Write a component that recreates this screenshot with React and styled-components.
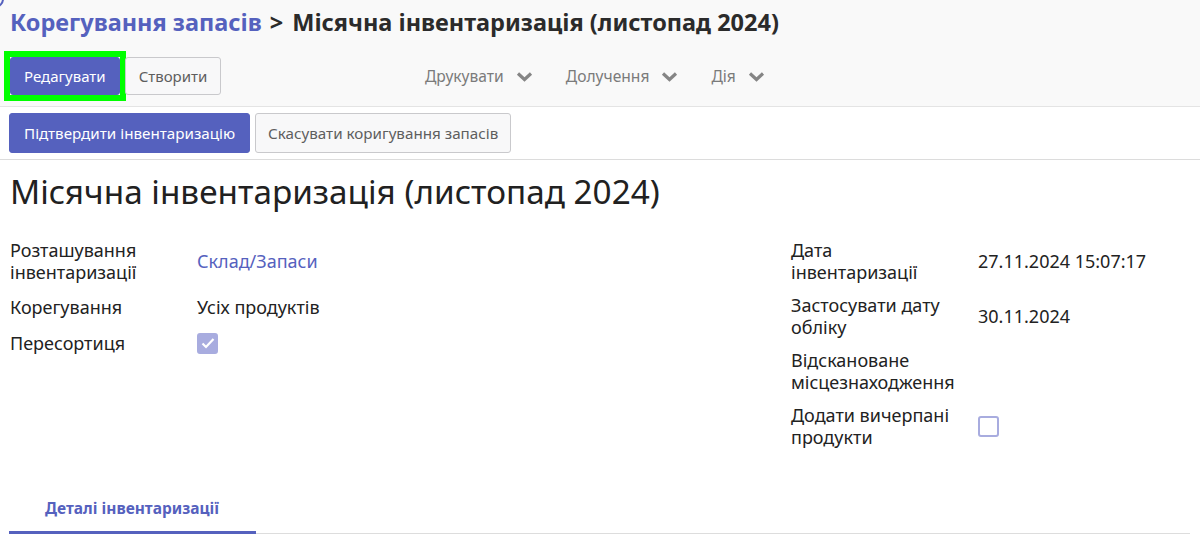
import React from "react";
import styled, { createGlobalStyle } from "styled-components";

const GlobalStyle = createGlobalStyle`
  body {
    margin: 0;
    background: #ffffff;
    font-family: "Noto Sans", "Open Sans", sans-serif;
    color: #212529;
  }
`;

const Page = styled.div`
  position: relative;
  width: 1200px;
  height: 544px;
  overflow: hidden;
`;

const CornerArc = styled.div`
  position: absolute;
  left: -14px;
  top: -10px;
  width: 14px;
  height: 14px;
  border: 2px solid #5561be;
  border-radius: 50%;
`;

const ControlPanel = styled.div`
  background: #f9f9f9;
  border-bottom: 1px solid #e4e4e4;
  padding: 0 10px 11px 10px;
`;

const Breadcrumb = styled.div`
  height: 44px;
  line-height: 44px;
  font-size: 23.5px;
  font-weight: 700;
  color: #2b2b2b;
  white-space: nowrap;
`;

const Crumb = styled.span`
  color: #5561be;
`;

const Sep = styled.span`
  margin: 0 9px 0 8px;
`;

const ButtonsRow = styled.div`
  display: flex;
  align-items: center;
  margin-top: 13px;
`;

const LeftButtons = styled.div`
  display: flex;
  gap: 5px;
  width: 415px;
`;

const FocusRing = styled.span`
  display: flex;
  outline: 6px solid #00ff00;
`;

const Button = styled.button`
  height: ${(p) => p.$h || 38}px;
  padding: 0 ${(p) => p.$px || 13}px;
  border-radius: 3px;
  font-family: inherit;
  font-size: ${(p) => p.$fs || 15}px;
  cursor: pointer;
  white-space: nowrap;
  background: ${(p) => (p.$primary ? "#5561be" : "#f8f8f9")};
  color: ${(p) => (p.$primary ? "#ffffff" : "#5e5e5e")};
  border: 1px solid ${(p) => (p.$primary ? "#5561be" : "#c9c9cc")};
`;

const Dropdowns = styled.div`
  display: flex;
  align-items: center;
  gap: 33px;
`;

const Dropdown = styled.div`
  display: flex;
  align-items: center;
  gap: 12px;
  font-size: 15.6px;
  color: #7b7b7b;
`;

const Chevron = () => (
  <svg width="17" height="11" viewBox="0 0 17 11">
    <polyline points="2,2.5 8.5,8.5 15,2.5" fill="none" stroke="#858585" strokeWidth="3.2" />
  </svg>
);

const StatusBar = styled.div`
  display: flex;
  gap: 5px;
  padding: 6px 9px;
  border-bottom: 1px solid #dcdcdc;
`;

const Sheet = styled.div`
  padding: 0 10px;
`;

const Title = styled.h1`
  margin: 0;
  height: 62px;
  line-height: 62px;
  font-size: 33.3px;
  font-weight: 400;
  color: #212121;
  white-space: nowrap;
`;

const Groups = styled.div`
  display: grid;
  grid-template-columns: 781px 1fr;
  margin-top: 18px;
`;

const Group = styled.div`
  display: flex;
  flex-direction: column;
  gap: ${(p) => p.$gap}px;
`;

const Field = styled.div`
  display: grid;
  grid-template-columns: 168px 1fr;
  column-gap: 19px;
  align-items: center;
  font-size: 18px;
  line-height: 21.5px;
  min-height: 21.5px;
`;

const Label = styled.div`
  color: #222222;
`;

const Value = styled.div`
  color: ${(p) => (p.$link ? "#5561be" : "#222222")};
  white-space: nowrap;
`;

const Check = styled.div`
  width: 21px;
  height: 21px;
  box-sizing: border-box;
  border-radius: 3px;
  display: flex;
  align-items: center;
  justify-content: center;
  background: ${(p) => (p.$checked ? "#a8acdf" : "#ffffff")};
  border: 2px solid #a8acdf;
`;

const Tick = () => (
  <svg width="14" height="12" viewBox="0 0 14 12">
    <polyline points="1.5,6.5 5,10 12.5,2" fill="none" stroke="#ffffff" strokeWidth="2.2" />
  </svg>
);

const Notebook = styled.div`
  display: flex;
  margin: 37px 0 0 -1px;
  border-bottom: 1px solid #dddddd;
`;

const Tab = styled.div`
  width: 247px;
  box-sizing: border-box;
  padding: 12px 0 12px 36px;
  font-size: 15.5px;
  font-weight: 700;
  white-space: nowrap;
  color: ${(p) => (p.$active ? "#5561be" : "#555")};
  border-bottom: 3px solid ${(p) => (p.$active ? "#5561be" : "transparent")};
  margin-bottom: -1px;
`;

const leftFields = [
  { label: "Розташування інвентаризації", value: "Склад/Запаси", link: true },
  { label: "Корегування", value: "Усіх продуктів" },
  { label: "Пересортиця", check: true, checked: true },
];

const rightFields = [
  { label: "Дата інвентаризації", value: "27.11.2024 15:07:17" },
  { label: "Застосувати дату обліку", value: "30.11.2024" },
  { label: "Відскановане місцезнаходження" },
  { label: "Додати вичерпані продукти", check: true, checked: false },
];

const renderField = (f) => (
  <Field key={f.label}>
    <Label>{f.label}</Label>
    {f.check ? (
      <Check $checked={f.checked}>{f.checked && <Tick />}</Check>
    ) : (
      <Value $link={f.link}>{f.value}</Value>
    )}
  </Field>
);

const App = () => {
  return (
    <Page>
      <GlobalStyle />
      <CornerArc />
      <ControlPanel>
        <Breadcrumb>
          <Crumb>Корегування запасів</Crumb>
          <Sep>&gt;</Sep>
          Місячна інвентаризація (листопад 2024)
        </Breadcrumb>
        <ButtonsRow>
          <LeftButtons>
            <FocusRing>
              <Button $primary>Редагувати</Button>
            </FocusRing>
            <Button $px={13}>Створити</Button>
          </LeftButtons>
          <Dropdowns>
            {["Друкувати", "Долучення", "Дія"].map((d) => (
              <Dropdown key={d}>
                {d}
                <Chevron />
              </Dropdown>
            ))}
          </Dropdowns>
        </ButtonsRow>
      </ControlPanel>
      <StatusBar>
        <Button $primary $h={40} $px={14} $fs={15.2}>
          Підтвердити інвентаризацію
        </Button>
        <Button $h={40} $px={12} $fs={15.2}>
          Скасувати коригування запасів
        </Button>
      </StatusBar>
      <Sheet>
        <Title>Місячна інвентаризація (листопад 2024)</Title>
        <Groups>
          <Group $gap={14}>{leftFields.map(renderField)}</Group>
          <Group $gap={12}>{rightFields.map(renderField)}</Group>
        </Groups>
        <Notebook>
          <Tab $active>Деталі інвентаризації</Tab>
        </Notebook>
      </Sheet>
    </Page>
  );
};

export default App;
